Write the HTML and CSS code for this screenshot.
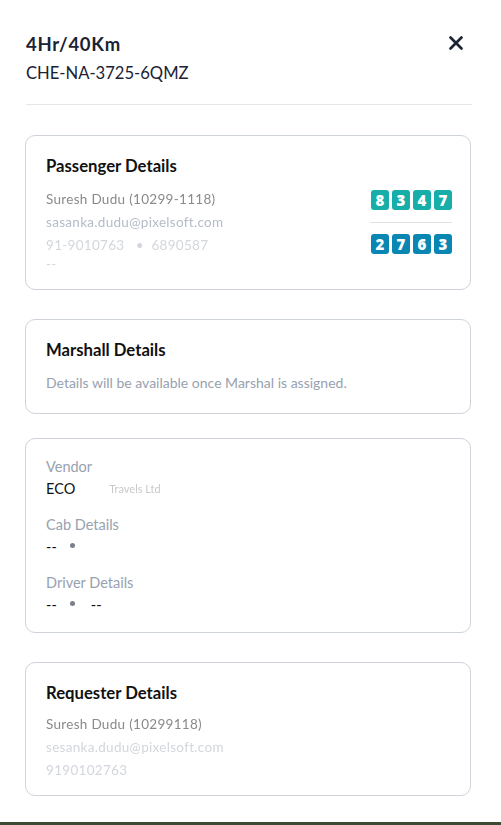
FILE: index.html
```html
<!DOCTYPE html>
<html>
<head>
<meta charset="utf-8">
<link rel="stylesheet" href="styles.css">
</head>
<body>
<div class="panel">
  <header class="head">
    <div class="head-text">
      <div class="title">4Hr/40Km</div>
      <div class="subtitle">CHE-NA-3725-6QMZ</div>
    </div>
    <svg class="close" width="16" height="16" viewBox="0 0 16 16"><path d="M2.5 2.5 L13.5 13.5 M13.5 2.5 L2.5 13.5" stroke="#1b2436" stroke-width="2.7" stroke-linecap="round"/></svg>
  </header>

  <section class="card card-passenger">
    <h3 class="card-title">Passenger Details</h3>
    <div class="pass-row">
      <div class="pass-info">
        <div class="line l-dark">Suresh Dudu (10299-1118)</div>
        <div class="line l-mid">sasanka.dudu@pixelsoft.com</div>
        <div class="line l-light l-third">91-9010763 &nbsp;&nbsp;•&nbsp; 6890587</div>
        <div class="line l-light dash">--</div>
      </div>
      <div class="otp">
        <div class="otp-row teal"><span>8</span><span>3</span><span>4</span><span>7</span></div>
        <div class="otp-sep"></div>
        <div class="otp-row blue"><span>2</span><span>7</span><span>6</span><span>3</span></div>
      </div>
    </div>
  </section>

  <section class="card card-marshall">
    <h3 class="card-title">Marshall Details</h3>
    <p class="note">Details will be available once Marshal is assigned.</p>
  </section>

  <section class="card card-vendor">
    <div class="field">
      <div class="label">Vendor</div>
      <div class="value">ECO <span class="faint">Travels Ltd</span></div>
    </div>
    <div class="field">
      <div class="label">Cab Details</div>
      <div class="value">-- <span class="dot"></span></div>
    </div>
    <div class="field">
      <div class="label">Driver Details</div>
      <div class="value">-- <span class="dot"></span> --</div>
    </div>
  </section>

  <section class="card card-requester">
    <h3 class="card-title">Requester Details</h3>
    <div class="line l-dark">Suresh Dudu (10299118)</div>
    <div class="line l-light">sesanka.dudu@pixelsoft.com</div>
    <div class="line l-light">9190102763</div>
  </section>
</div>
<div class="bottom-bar"></div>
</body>
</html>
```

FILE: styles.css
```css
html, body {
  margin: 0;
  padding: 0;
  background: #ffffff;
}
body {
  font-family: Lato, "Open Sans", "Liberation Sans", sans-serif;
  color: #111111;
  width: 501px;
  height: 825px;
  position: relative;
  overflow: hidden;
}
.panel {
  padding: 0 30px 0 25px;
}
.head {
  display: flex;
  justify-content: space-between;
  align-items: flex-start;
  padding: 33px 0 0 1px;
  margin-bottom: 30px;
}
.head-text {
  flex: 1;
  border-bottom: 1px solid #e4e6ea;
  padding-bottom: 21px;
  margin-right: -24px;
}
.title {
  font-size: 18.5px;
  font-weight: 700;
  line-height: 22px;
  letter-spacing: 0.7px;
  color: #1a2233;
}
.subtitle {
  font-size: 16.6px;
  line-height: 20px;
  margin-top: 8px;
  color: #1a2233;
}
.close {
  margin-top: 2px;
  margin-right: 7px;
  position: relative;
  z-index: 1;
}
.card {
  border: 1px solid #cfd3da;
  border-radius: 10px;
  padding: 20px;
}
.card-title {
  margin: 0;
  font-size: 16.7px;
  font-weight: 700;
  line-height: 20px;
  color: #111111;
}
.card-passenger {
  padding-bottom: 17px;
  margin-bottom: 29px;
}
.pass-row {
  display: flex;
  justify-content: space-between;
  margin-top: 12px;
}
.line {
  font-size: 13.5px;
  line-height: 23px;
  filter: blur(0.5px);
  letter-spacing: 0.3px;
}
.l-dark { color: #8a8a8a; }
.l-mid { color: #b5bcc8; }
.l-light { color: #d3d6dc; }
.l-third { line-height: 22px; }
.dash { line-height: 16px; }
.otp {
  display: flex;
  flex-direction: column;
  align-items: flex-end;
  margin-top: 2px;
  margin-right: -2px;
}
.otp-row {
  display: flex;
  gap: 3px;
}
.otp-row span {
  width: 18px;
  height: 20px;
  border-radius: 3px;
  color: #ffffff;
  font-weight: 800;
  font-size: 15px;
  line-height: 20px;
  text-align: center;
  font-family: "Open Sans", Lato, sans-serif;
}
.teal span { background: #17aeaa; }
.blue span { background: #0a86b2; }
.otp-sep {
  width: 82px;
  height: 1px;
  background: #e1e3e6;
  margin: 12px 0 11px;
}
.card-marshall {
  margin-bottom: 24px;
  padding-bottom: 20px;
}
.note {
  margin: 13px 0 0;
  font-size: 14px;
  line-height: 20px;
  color: #98a1b0;
}
.card-vendor {
  padding-top: 18px;
  padding-bottom: 15px;
  margin-bottom: 29px;
}
.field + .field {
  margin-top: 14px;
}
.label {
  font-size: 14.5px;
  line-height: 20px;
  color: #98a1b0;
}
.value {
  font-size: 14.5px;
  line-height: 24px;
  color: #111111;
  display: flex;
  align-items: center;
}
.faint {
  color: #c9c9c9;
  font-size: 11px;
  margin-left: 34px;
  filter: blur(0.6px);
}
.dot {
  display: inline-block;
  width: 5px;
  height: 5px;
  border-radius: 50%;
  background: #7a7f88;
  margin: 0 16px 3px 13px;
}
.card-requester {
  padding-bottom: 13px;
}
.card-requester .card-title {
  margin-bottom: 10px;
}
.bottom-bar {
  position: absolute;
  left: 0;
  right: 0;
  bottom: 0;
  height: 3px;
  background: #3c4a34;
}
```
